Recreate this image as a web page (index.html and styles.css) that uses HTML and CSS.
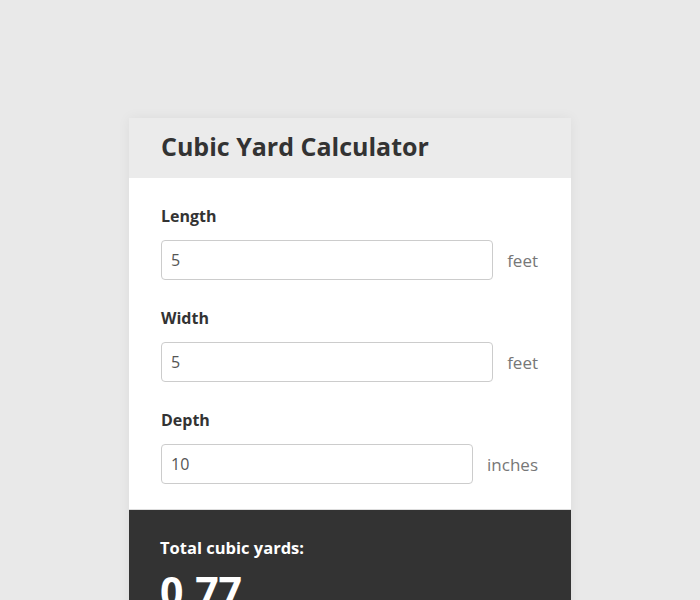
FILE: index.html
```html
<!DOCTYPE html>
<html>
<head>
  <meta charset="UTF-8">
  <link rel="stylesheet" href="styles.css">
</head>
<body>
  <div class="calculator">
    <div class="calc-header">
      <h1>Cubic Yard Calculator</h1>
    </div>

    <div class="calc-body">
      <div class="field">
        <label for="length">Length</label>
        <div class="input-row">
          <input type="text" id="length" value="5">
          <span class="unit">feet</span>
        </div>
      </div>

      <div class="field">
        <label for="width">Width</label>
        <div class="input-row">
          <input type="text" id="width" value="5">
          <span class="unit">feet</span>
        </div>
      </div>

      <div class="field">
        <label for="depth">Depth</label>
        <div class="input-row">
          <input type="text" id="depth" value="10">
          <span class="unit">inches</span>
        </div>
      </div>
    </div>

    <div class="calc-result">
      <div class="result-label">Total cubic yards:</div>
      <div class="result-value">0.77</div>
    </div>
  </div>
</body>
</html>
```

FILE: styles.css
```css
body {
  margin: 0;
  padding-top: 118px;
  font-family: "Open Sans", Arial, sans-serif;
  background-color: #e9e9e9;
  color: #333;
}

.calculator {
  width: 442px;
  margin: 0 auto;
  box-shadow: 0 0 12px rgba(0, 0, 0, 0.06);
}

.calc-header {
  height: 60px;
  display: flex;
  align-items: center;
  padding: 0 33px 4px 32px;
  box-sizing: border-box;
  background-color: #ebebeb;
}

.calc-header h1 {
  margin: 0;
  font-size: 25px;
  font-weight: 700;
  color: #333;
}

.calc-body {
  display: flex;
  flex-direction: column;
  gap: 26px;
  padding: 26px 33px 25px 32px;
  background-color: #fff;
  border-bottom: 1px solid #ddd;
}

.field label {
  display: block;
  font-size: 16px;
  line-height: 24px;
  font-weight: 700;
  color: #333;
  margin-bottom: 12px;
}

.input-row {
  display: flex;
  align-items: center;
  gap: 14px;
}

.input-row input {
  flex: 1;
  min-width: 0;
  height: 40px;
  box-sizing: border-box;
  padding: 0 9px;
  border: 1px solid #ccc;
  border-radius: 4px;
  font-family: inherit;
  font-size: 16px;
  color: #555;
  outline: none;
}

.unit {
  font-size: 17px;
  color: #777;
}

.calc-result {
  padding: 27px 33px 30px 31px;
  background-color: #333;
  color: #fff;
}

.result-label {
  font-size: 16.5px;
  font-weight: 700;
  line-height: 22px;
}

.result-value {
  margin-top: 7px;
  font-size: 41px;
  font-weight: 700;
  line-height: 50px;
}
```
